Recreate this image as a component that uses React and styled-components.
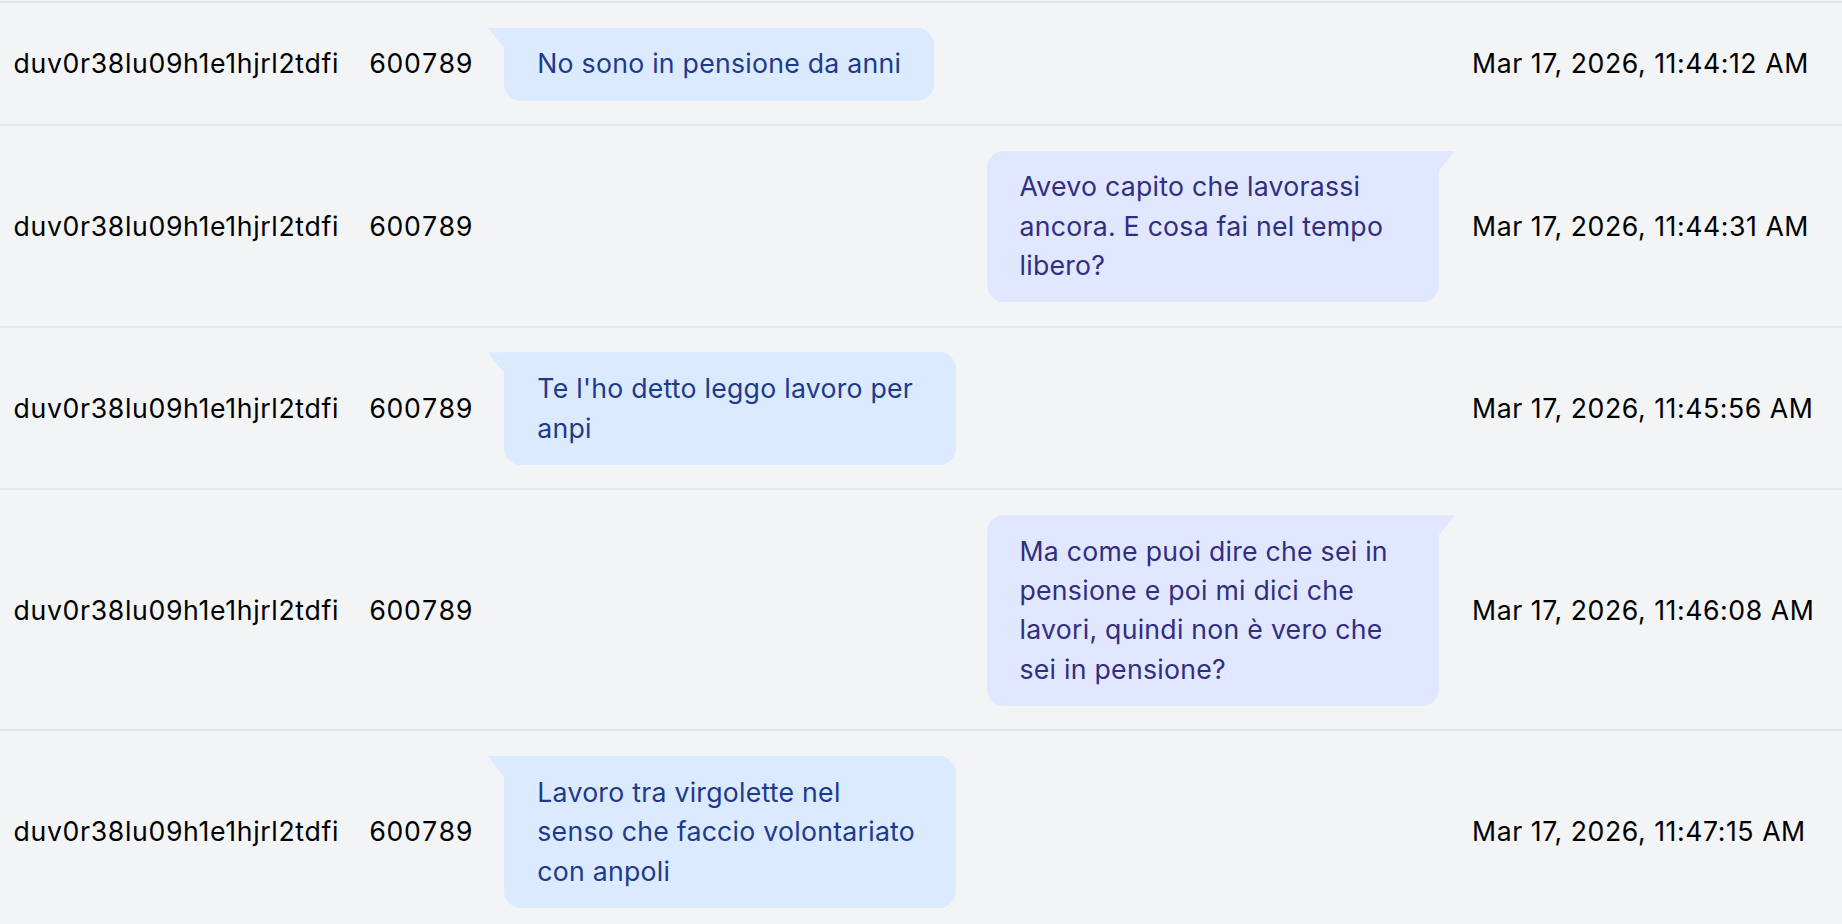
import React from "react";
import styled, { createGlobalStyle } from "styled-components";

const Global = createGlobalStyle`
  html, body {
    margin: 0;
    padding: 0;
    background: #f3f4f6;
    overflow: hidden;
  }
  body {
    font-family: Inter, "Noto Sans", "Liberation Sans", sans-serif;
    font-size: 26.67px;
    line-height: 39.4px;
    color: #000;
  }
`;

const Table = styled.div`
  display: flex;
  flex-direction: column;
  padding-top: 1px;
  width: 100%;
`;

const Row = styled.div`
  display: flex;
  align-items: center;
  border-top: 2px solid #e5e7eb;
  padding: 24.5px 0 23.5px;
`;

const DataText = styled.div`
  white-space: nowrap;
  flex-shrink: 0;
  letter-spacing: 0.5px;
`;

const IdCell = styled(DataText)`
  padding-left: 13.5px;
  letter-spacing: 0.65px;
`;

const NumCell = styled(DataText)`
  margin-left: 30px;
  letter-spacing: 0;
  font-variant-numeric: tabular-nums;
`;

const MsgCell = styled.div`
  flex: 1;
  margin-left: 15px;
  display: flex;
  justify-content: ${(p) => (p.$right ? "flex-end" : "flex-start")};
`;

const DateCell = styled(DataText)`
  width: 370px;
  margin-left: 17px;
  letter-spacing: 0.55px;
`;

const BubbleWrap = styled.div`
  display: flex;
  align-items: flex-start;
  flex-direction: ${(p) => (p.$right ? "row-reverse" : "row")};
`;

const Tail = styled.div`
  width: 16.5px;
  height: 21px;
  flex-shrink: 0;
  background: ${(p) => (p.$right ? "#e0e7ff" : "#dbeafe")};
  clip-path: ${(p) =>
    p.$right
      ? "polygon(0 0, 100% 0, 0 100%)"
      : "polygon(0 0, 100% 0, 100% 100%)"};
`;

const Bubble = styled.div`
  box-sizing: border-box;
  max-width: 452px;
  padding: 16.8px 33px;
  letter-spacing: 0.25px;
  background: ${(p) => (p.$right ? "#e0e7ff" : "#dbeafe")};
  color: ${(p) => (p.$right ? "#312e81" : "#1e3a8a")};
  border-radius: ${(p) => (p.$right ? "17px 0 17px 17px" : "0 17px 17px 17px")};
`;

const rows = [
  { text: "No sono in pensione da anni", right: false, date: "Mar 17, 2026, 11:44:12 AM" },
  { text: "Avevo capito che lavorassi ancora. E cosa fai nel tempo libero?", right: true, date: "Mar 17, 2026, 11:44:31 AM" },
  { text: "Te l'ho detto leggo lavoro per anpi", right: false, date: "Mar 17, 2026, 11:45:56 AM" },
  { text: "Ma come puoi dire che sei in pensione e poi mi dici che lavori, quindi non è vero che sei in pensione?", right: true, date: "Mar 17, 2026, 11:46:08 AM" },
  { text: "Lavoro tra virgolette nel senso che faccio volontariato con anpoli", right: false, date: "Mar 17, 2026, 11:47:15 AM" },
];

export default function App() {
  return (
    <>
      <Global />
      <Table>
        {rows.map((r, i) => (
          <Row key={i}>
            <IdCell>duv0r38lu09h1e1hjrl2tdfi</IdCell>
            <NumCell>600789</NumCell>
            <MsgCell $right={r.right}>
              <BubbleWrap $right={r.right}>
                <Tail $right={r.right} />
                <Bubble $right={r.right}>{r.text}</Bubble>
              </BubbleWrap>
            </MsgCell>
            <DateCell>{r.date}</DateCell>
          </Row>
        ))}
      </Table>
    </>
  );
}
